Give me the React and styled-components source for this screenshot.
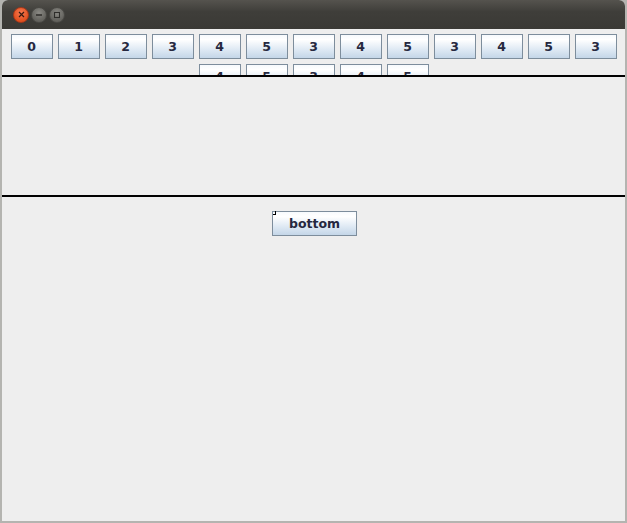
import React from 'react';
import styled, { createGlobalStyle } from 'styled-components';

const GlobalStyle = createGlobalStyle`
  html, body {
    margin: 0;
    padding: 0;
    background: #b4b4b0;
  }
  body {
    width: 627px;
    height: 523px;
    overflow: hidden;
    font-family: "DejaVu Sans", "Liberation Sans", sans-serif;
  }
`;

const Window = styled.div`
  width: 623px;
  height: 521px;
  margin-left: 2px;
  display: flex;
  flex-direction: column;
  background: #eeeeee;
  border-radius: 6px 6px 0 0;
  overflow: hidden;
`;

const TitleBar = styled.div`
  height: 29px;
  flex: none;
  display: flex;
  align-items: center;
  gap: 2px;
  padding-left: 11px;
  background: linear-gradient(#55534e, #3f3e3a 40%, #3a3935);
`;

const Dot = styled.div`
  width: 16px;
  height: 16px;
  border-radius: 50%;
  display: flex;
  align-items: center;
  justify-content: center;
  box-sizing: border-box;
  border: 1px solid ${p => (p.close ? '#a8381a' : '#4a4945')};
  background: ${p =>
    p.close
      ? 'radial-gradient(circle at 50% 35%, #f77a52, #e1501f 70%)'
      : 'radial-gradient(circle at 50% 35%, #8a8984, #62615c 70%)'};
`;

const TopPanel = styled.div`
  height: 46px;
  flex: none;
  box-sizing: border-box;
  padding: 5px;
  display: flex;
  flex-wrap: wrap;
  justify-content: center;
  align-content: flex-start;
  gap: 5px;
  overflow: hidden;
`;

const Divider = styled.div`
  height: 2px;
  flex: none;
  background: #000;
`;

const MiddlePanel = styled.div`
  height: 118px;
  flex: none;
`;

const BottomPanel = styled.div`
  flex: 1;
  display: flex;
  justify-content: center;
  align-items: flex-start;
  padding-top: 14px;
  padding-left: 2px;
`;

const Button = styled.button`
  position: relative;
  width: ${p => p.w || 42}px;
  height: 25px;
  flex: none;
  box-sizing: border-box;
  margin: 0;
  padding: 0;
  border: 1px solid #7d8d9c;
  border-radius: 0;
  background: linear-gradient(#f7fafd, #ffffff 20%, #dde8f3 65%, #c4d6e8);
  color: #262840;
  font-family: "DejaVu Sans", "Liberation Sans", sans-serif;
  font-weight: bold;
  font-size: 12.5px;
  line-height: 23px;
  text-align: center;

  ${p =>
    p.marked &&
    `
    &::before {
      content: '';
      position: absolute;
      left: 0;
      top: -1px;
      width: 2px;
      height: 3px;
      border-right: 1px solid #000;
      border-bottom: 1px solid #000;
    }
  `}
`;

const labels = ['0', '1', '2', '3', '4', '5', '3', '4', '5', '3', '4', '5', '3', '4', '5', '3', '4', '5'];

const App = () => (
  <>
    <GlobalStyle />
    <Window>
      <TitleBar>
        <Dot close>
          <svg width="7" height="7" viewBox="0 0 7 7">
            <path d="M1 1L6 6M6 1L1 6" stroke="#3a1a10" strokeWidth="1.2" />
          </svg>
        </Dot>
        <Dot>
          <svg width="8" height="8" viewBox="0 0 8 8">
            <path d="M1 4H7" stroke="#2e2d2a" strokeWidth="1.3" />
          </svg>
        </Dot>
        <Dot>
          <svg width="8" height="8" viewBox="0 0 8 8">
            <rect x="1.5" y="1.5" width="5" height="5" fill="none" stroke="#2e2d2a" strokeWidth="1.1" />
          </svg>
        </Dot>
      </TitleBar>
      <TopPanel>
        {labels.map((l, i) => (
          <Button key={i}>{l}</Button>
        ))}
      </TopPanel>
      <Divider />
      <MiddlePanel />
      <Divider />
      <BottomPanel>
        <Button w={85} marked>bottom</Button>
      </BottomPanel>
    </Window>
  </>
);

export default App;
